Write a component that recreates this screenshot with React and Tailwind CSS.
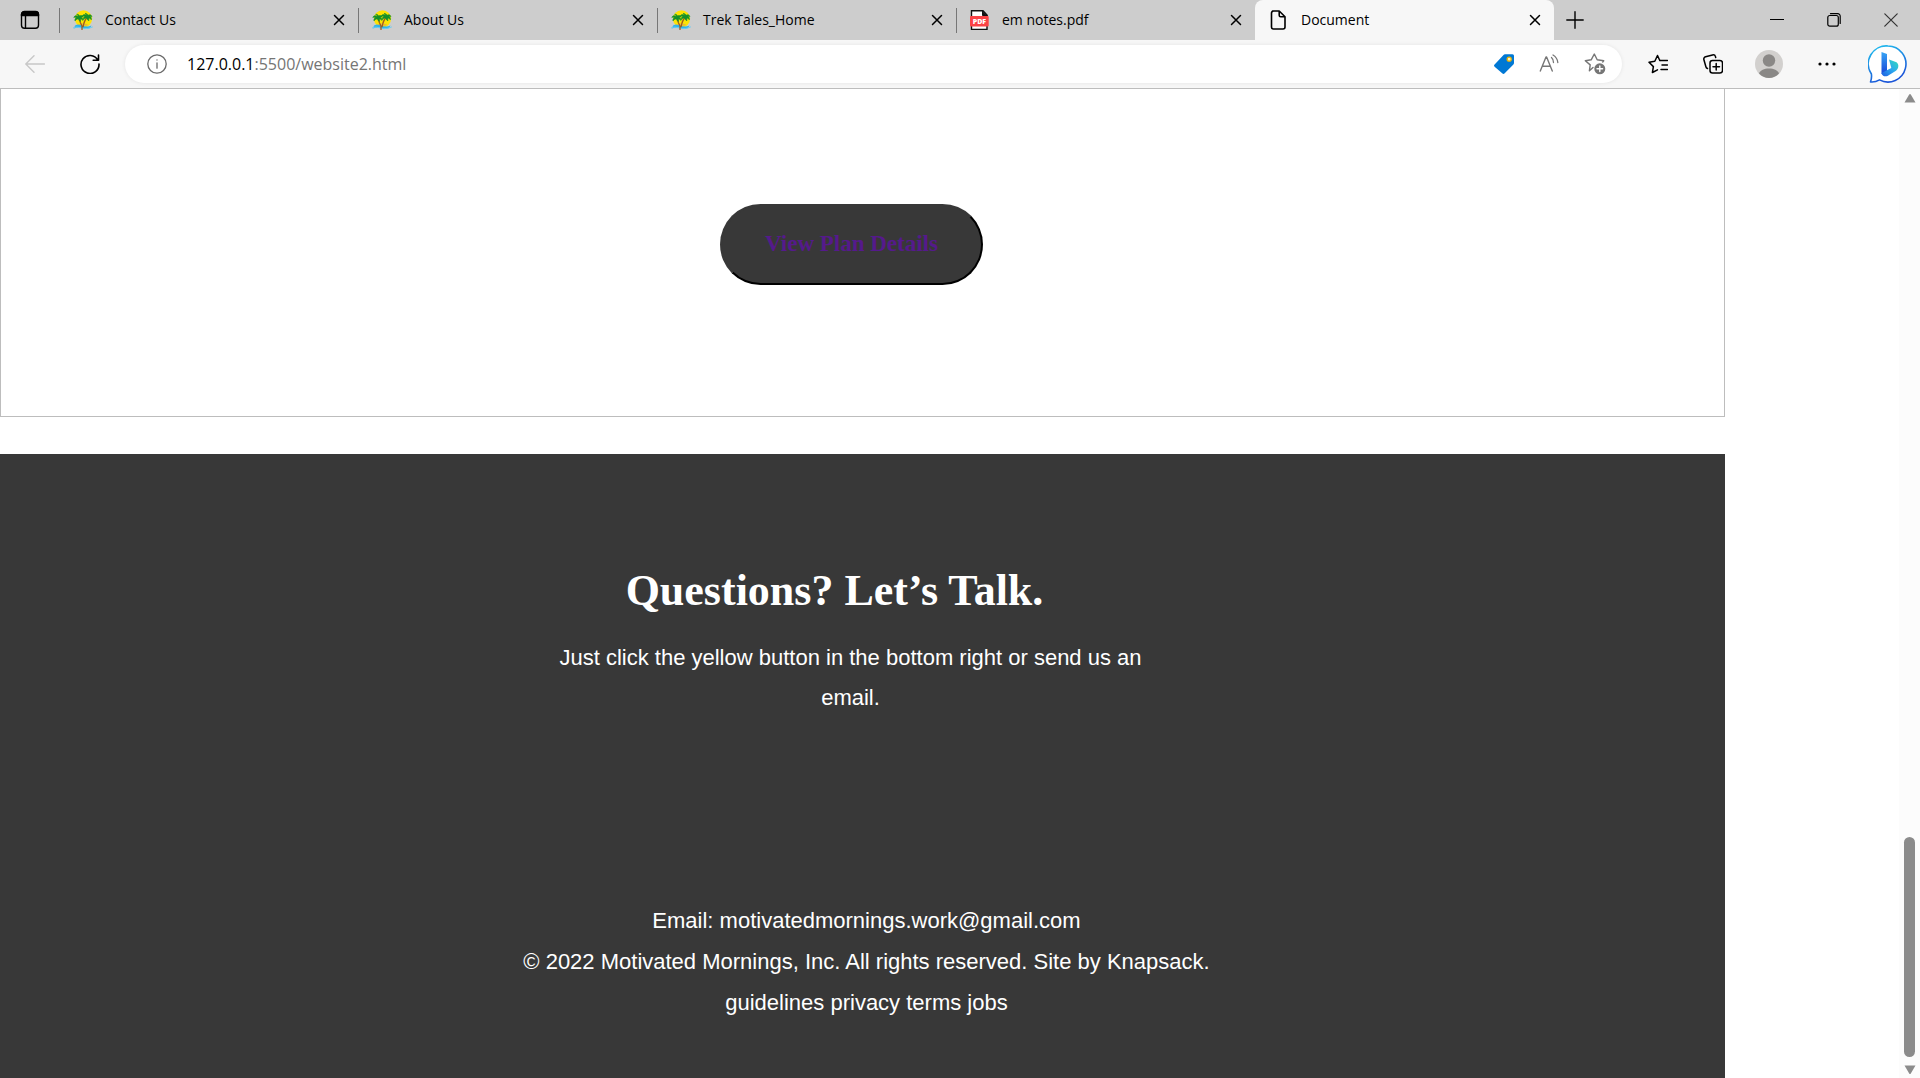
import React from "react";

const UI = "font-['Open_Sans','Noto_Sans',sans-serif]";

function Icon({ size = 20, children, className = "", ...rest }) {
  return (
    <svg
      width={size}
      height={size}
      viewBox={`0 0 ${size} ${size}`}
      fill="none"
      stroke="currentColor"
      strokeWidth="1.4"
      strokeLinecap="round"
      strokeLinejoin="round"
      aria-hidden="true"
      className={`shrink-0 ${className}`}
      {...rest}
    >
      {children}
    </svg>
  );
}

function PalmIcon() {
  return (
    <Icon stroke="none">
      <circle cx="10.5" cy="8.8" r="8.600" fill="#fde403" />
      <path d="M2 15.500c2.500-1.600 5-1.200 7.500 0s6 1.600 9 0l-1.500 2.500c-3.500 1.500-5.500.8-8.500 0s-5-.3-7.500.4z" fill="#2fb4ea" />
      <path d="M5 14.800c2.500-1.700 7-1.700 10.500.2-2.500 1-4.500.7-6.500.2s-2.500-.6-4-.4z" fill="#e9b53c" />
      <path d="M0 18c3-1.700 6-.6 9 .2s7 .5 10.500-1.200" fill="none" stroke="#6acdf2" strokeWidth="1" />
      <path d="M6 7.500c.4 3 1.500 6 3 8.500M14.500 7c-2.500 2.500-3.800 6-4.300 9.500M9 19.500v-3" fill="none" stroke="#a05a1c" strokeWidth="1.300" />
      <g fill="#14902a" stroke="#14902a" strokeWidth=".6">
        <path d="M5.500 6.500c-2-1.500-4-1-4.700 1 1.200-.5 2-.3 2.700.2-1.300.6-1.800 1.800-1.500 3.200 1-1.400 2.200-2 3.500-2 .2 1.200.8 2 2 2.600-.1-1.300.1-2 .3-2.800.8.2 1.500.9 2 1.800.3-1.700-.3-2.800-1.500-3.300.7-.3 1.400-.3 2 0-.7-1.600-2.200-2.200-3.700-1.200C6.300 4.800 5 4.200 3.700 4.300c1 .5 1.500 1.200 1.800 2.200z" />
        <path d="M14 5.800c-1.700-1.800-4-1.500-5 .5 1.200-.4 2.200-.2 3 .3-1.300.7-1.900 1.800-1.700 3.200 1-1.300 2.200-1.800 3.400-1.700.3 1.300 1 2.200 2.200 2.700-.2-1.100 0-2 .1-2.900 1 .2 1.700.9 2.300 1.900.3-1.800-.4-3-1.500-3.500.9-.2 1.500-.1 2.200.3-.8-1.800-2.400-2.300-4-1.300-.3-1.300-1.500-2-3-1.900 1 .6 1.700 1.300 2 2.400z" />
      </g>
    </Icon>
  );
}

function PdfIcon() {
  return (
    <Icon strokeLinejoin="miter">
      <path d="M1.500 10.500h15.500v9h-15.500zM1.500 9V.8h11.500L17 5v4" fill="#fff" stroke="#111" />
      <path d="M12.500 1v4.500h4.500z" fill="#111" stroke="#111" strokeWidth="1" />
      <rect x="0" y="6" width="18.700" height="10.500" rx="1" fill="#fb4245" stroke="none" />
      <text x="9.400" y="14" textAnchor="middle" fontSize="7" fontWeight="800" fill="#fff" stroke="none" className={UI}>PDF</text>
    </Icon>
  );
}

function PageIcon() {
  return (
    <Icon strokeWidth="1.600">
      <path d="M3.500 1h6.700L16 6.800V17a2 2 0 0 1-2 2H4.500a2 2 0 0 1-2-2V3a2 2 0 0 1 2-2zM10.200 1v4.300a1.500 1.500 0 0 0 1.500 1.500H16" />
    </Icon>
  );
}

function CloseX() {
  return (
    <Icon size={12} strokeWidth="1.500">
      <path d="M1.500 1.500l9 9M10.500 1.500l-9 9" />
    </Icon>
  );
}

function Tab({ icon, title, active }) {
  return (
    <div
      className={
        active
          ? "relative flex h-10 w-[299px] items-center rounded-t-lg bg-[#f7f7f7] pl-[14px] pr-[13px]"
          : "relative flex h-10 w-[299px] items-center pl-[14px] pr-[13px]"
      }
    >
      {!active && <span className="absolute left-0 top-2 h-[25px] w-px bg-[#777]" />}
      <button type="button" className="flex flex-1 items-center gap-3 text-left text-sm text-black">
        {icon}
        <span>{title}</span>
      </button>
      <button type="button" aria-label={`Close ${title}`} className="flex h-6 w-[12px] items-center justify-center text-black">
        <CloseX />
      </button>
    </div>
  );
}

function IconButton({ label, className = "", children }) {
  return (
    <button type="button" aria-label={label} className={`flex h-9 shrink-0 items-center justify-center ${className}`}>
      {children}
    </button>
  );
}

function TabStrip() {
  return (
    <div className="flex h-10 bg-[#cdcdcd]">
      <IconButton label="Tab actions" className="h-10 w-[59px]">
        <Icon>
          <rect x="1.500" y="1.800" width="17" height="16.500" rx="3" />
          <path d="M1.500 5.500V4.500a3 3 0 0 1 3-3h11a3 3 0 0 1 3 3v1z" fill="currentColor" />
          <path d="M5.500 6v12" />
        </Icon>
      </IconButton>
      <Tab icon={<PalmIcon />} title="Contact Us" />
      <Tab icon={<PalmIcon />} title="About Us" />
      <Tab icon={<PalmIcon />} title="Trek Tales_Home" />
      <Tab icon={<PdfIcon />} title="em notes.pdf" />
      <Tab icon={<PageIcon />} title="Document" active />
      <IconButton label="New tab" className="h-10 w-[42px]">
        <Icon size={18}><path d="M9 .8v16.400M.8 9h16.400" /></Icon>
      </IconButton>
      <div className="flex-1" />
      <IconButton label="Minimize" className="h-10 w-[57px]">
        <Icon size={14} strokeWidth="1.200"><path d="M.5 6.500h13" /></Icon>
      </IconButton>
      <IconButton label="Restore" className="h-10 w-[57px]">
        <Icon size={14} strokeWidth="1.200">
          <rect x=".8" y="2.500" width="10.500" height="10.700" rx="2" />
          <path d="M3.500.7h7.200a2.500 2.500 0 0 1 2.500 2.500v7.300" />
        </Icon>
      </IconButton>
      <IconButton label="Close window" className="h-10 w-[58px] text-[#333]">
        <Icon size={14} strokeWidth="1.200"><path d="M.8.8l12.400 12.400M13.200.8L.8 13.200" /></Icon>
      </IconButton>
    </div>
  );
}

function BingIcon() {
  return (
    <Icon size={40} stroke="none">
      <defs>
        <linearGradient id="ring" x1="0" y1="0" x2=".4" y2="1">
          <stop offset="0" stopColor="#1fc3ef" />
          <stop offset="1" stopColor="#1b55d8" />
        </linearGradient>
        <linearGradient id="stem" x1="0" y1="0" x2="0" y2="1">
          <stop offset="0" stopColor="#37a5f5" />
          <stop offset="1" stopColor="#1746d8" />
        </linearGradient>
        <linearGradient id="bowl" x1="1" y1="0" x2="0" y2="1">
          <stop offset="0" stopColor="#31dfb8" />
          <stop offset=".5" stopColor="#2ba7ef" />
          <stop offset="1" stopColor="#1d5be0" />
        </linearGradient>
      </defs>
      <path d="M20 2a18 18 0 1 1-8.500 33.900C8.500 37.700 5.500 38.300 2.500 38c1-2.500 1.300-5 .9-8A18 18 0 0 1 20 2z" fill="#fff" stroke="url(#ring)" strokeWidth="1.600" />
      <path d="M13.500 8l5.500 2v17.500L13.500 30z" fill="url(#stem)" />
      <path d="M21 15.500l7.500 2.800c1.500 1 2.200 3 1.700 5-.5 1.800-1.500 3-3 4L19.500 32c-2.500.8-5.500.3-6-3l9.800-5z" fill="url(#bowl)" />
    </Icon>
  );
}

function Toolbar() {
  return (
    <div className="flex h-[49px] items-center border-b border-[#bdbdbd] bg-[#f7f7f7]">
      <IconButton label="Back" className="w-[70px] text-[#c8c8c8]">
        <Icon><path d="M19.500 10H1M9 1.800L.8 10 9 18.200" /></Icon>
      </IconButton>
      <IconButton label="Refresh" className="w-10">
        <Icon strokeWidth="1.600"><path d="M17.800 6A9 9 0 1 0 19 10M18.500 1v5.300h-5.300" /></Icon>
      </IconButton>
      <div className="ml-[15px] flex h-[38px] flex-1 items-center rounded-full bg-white pl-[22px] pr-4 shadow-[0_0_4px_rgba(0,0,0,0.08)]">
        <IconButton label="View site information" className="w-5 text-[#6a6a6a]">
          <Icon strokeWidth="1.300">
            <circle cx="10" cy="10" r="9.200" />
            <path d="M10 8.800v5.400M10 5.800v.3" />
          </Icon>
        </IconButton>
        <label htmlFor="url" className="ml-5 text-base text-black">127.0.0.1</label>
        <input id="url" type="text" defaultValue=":5500/website2.html" className="min-w-0 flex-1 bg-transparent text-base text-[#757575] outline-none" />
        <div className="flex gap-[25px] text-[#767676]">
          <IconButton label="Shopping" className="w-5">
            <Icon stroke="none">
              <path d="M11 .3h7.500A1.500 1.500 0 0 1 20 1.800V9a2 2 0 0 1-.6 1.400l-8.700 8.900a1.800 1.800 0 0 1-2.500 0L.6 12.700a1.600 1.600 0 0 1 0-2.300L9.500 1A2 2 0 0 1 11 .3z" fill="#0078d4" />
              <circle cx="15.200" cy="5.200" r="2" fill="#fff3c4" stroke="#f0b400" strokeWidth="1.300" />
            </Icon>
          </IconButton>
          <IconButton label="Read aloud" className="w-5">
            <Icon>
              <path d="M1.300 17L7 3h.6l5.700 14M3.300 12.200h8" />
              <path d="M12.500 3.500c1.500 1.300 2 3 2 5M14 1c3 1.800 4.500 4.300 4.800 7.500" strokeWidth="1.300" />
            </Icon>
          </IconButton>
          <IconButton label="Add to favorites" className="w-[22px]">
            <Icon size={22}>
              <path d="M9 14.500l-3.600 3.300.8-5.900L1.300 7.700l5.900-.9L10.300 1l2.900 5.800 6.500.9-1 1.300" />
              <circle cx="15.800" cy="15.800" r="5.500" fill="currentColor" stroke="none" />
              <path d="M15.800 13v5.600M13 15.800h5.600" stroke="#fff" />
            </Icon>
          </IconButton>
        </div>
      </div>
      <IconButton label="Favorites" className="ml-2 w-[55px]">
        <Icon strokeWidth="1.500">
          <path d="M12 6.500h7.500M14 11h5.500M13 15.500h6.500" />
          <path d="M9.500 15.800L4.400 18.500l1-5.900L1 8.200l5.800-.9L9.500 1.500l2.300 5" />
        </Icon>
      </IconButton>
      <IconButton label="Collections" className="w-[55px]">
        <Icon strokeWidth="1.500">
          <rect x="7" y="6.500" width="12.500" height="12.500" rx="2.500" />
          <path d="M13.200 9.500v6.500M10 12.700h6.500M4.500 14.500a2.500 2.500 0 0 1-1.600-1.700L.9 5.800A2.500 2.500 0 0 1 2.600 2.700L9.500.9a2.500 2.500 0 0 1 3 1.700l.2.900" />
        </Icon>
      </IconButton>
      <IconButton label="Profile" className="w-[58px]">
        <Icon size={28} stroke="none">
          <circle cx="14" cy="14" r="14" fill="#d2d0ce" />
          <circle cx="14" cy="10.500" r="6.200" fill="#8a8886" />
          <path d="M4 23.500c1.500-3.500 5-5 10-5s8.500 1.500 10 5A14 14 0 0 1 14 28 14 14 0 0 1 4 23.500z" fill="#8a8886" />
        </Icon>
      </IconButton>
      <IconButton label="Settings and more" className="w-[57px]">
        <Icon stroke="none" fill="currentColor">
          <circle cx="3" cy="10" r="1.600" /><circle cx="10" cy="10" r="1.600" /><circle cx="17" cy="10" r="1.600" />
        </Icon>
      </IconButton>
      <IconButton label="Bing" className="w-[65px]"><BingIcon /></IconButton>
    </div>
  );
}

function Scrollbar() {
  return (
    <div className="flex w-[21px] flex-col items-center bg-[#fcfcfc] pb-[3px] pt-1 text-[#8b8b8b]" aria-hidden="true">
      <Icon size={12} stroke="none" fill="currentColor"><path d="M5.200 1.500a1 1 0 0 1 1.600 0L11.500 9.500H.5z" /></Icon>
      <div className="flex-1" />
      <div className="h-[220px] w-[11px] rounded-full bg-[#8b8b8b]" />
      <Icon size={12} stroke="none" fill="currentColor" className="mt-1.5"><path d="M.5 2.500h11L6.800 10.500a1 1 0 0 1-1.600 0z" /></Icon>
    </div>
  );
}

export default function App() {
  return (
    <div className="flex min-h-screen flex-col bg-white">
      <header className={UI}>
        <TabStrip />
        <Toolbar />
      </header>
      <div className="flex flex-1">
        <main className="flex flex-1 flex-col pr-[174px]">
          <section className="flex justify-center border border-t-0 border-[#bdbdbd] pb-[131px] pr-[22px] pt-[115px]">
            <button type="button" className="h-[81px] rounded-full border-2 border-b-black border-l-[#383838] border-r-black border-t-[#383838] bg-[#383838] px-[43px]">
              <a href="#plan" className="font-['Liberation_Serif',serif] text-[23px] font-bold text-[#551a8b]">View Plan Details</a>
            </button>
          </section>
          <footer className="mt-[37px] flex flex-1 flex-col items-center bg-[#383838] pb-10 pt-[107px] text-center font-['Liberation_Sans',sans-serif] text-[22px] leading-[40px] text-white">
            <h2 className="pr-14 font-['Liberation_Serif',serif] text-[44px] font-bold leading-[60px]">Questions? Let’s Talk.</h2>
            <div className="mt-[17px] pr-6">
              <p className="max-w-[620px]">Just click the yellow button in the bottom right or send us an email.</p>
            </div>
            <div className="mt-[182px] pl-2 leading-[41px]">
              <p>Email: motivatedmornings.work@gmail.com</p>
              <p>© 2022 Motivated Mornings, Inc. All rights reserved. Site by Knapsack.</p>
              <p>guidelines privacy terms jobs</p>
            </div>
          </footer>
        </main>
        <Scrollbar />
      </div>
    </div>
  );
}
